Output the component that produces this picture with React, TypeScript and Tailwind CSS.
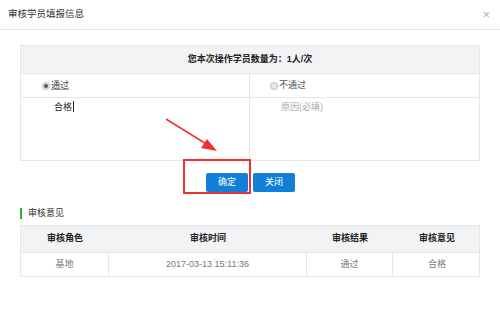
import React from 'react';

const font = { fontFamily: '"Liberation Sans", "Noto Sans CJK SC", sans-serif' };

function Radio({ checked }: { checked?: boolean }) {
  return (
    <span className="w-[8px] h-[8px] rounded-full border border-[#bdbdbd] bg-[#e8e8e8] flex items-center justify-center mr-[1px]">
      {checked && <span className="w-[4px] h-[4px] rounded-full bg-[#555]" />}
    </span>
  );
}

export default function App() {
  const cols = 'grid grid-cols-[88px_198px_86px_88px]';
  return (
    <div className="w-[500px] h-[334px] bg-white relative text-[9px] text-[#333]" style={font}>
      {/* dialog header */}
      <div className="h-[30px] border-b border-[#e8e8e8] flex items-center justify-between pl-[8px] pr-[10px]">
        <span className="text-[#333] text-[9.5px]">审核学员填报信息</span>
        <span className="text-[#b5b5b5] text-[13px] leading-none">×</span>
      </div>

      <div className="px-[20px] pt-[15px]">
        {/* review form */}
        <div className="border border-[#e6e6e6]">
          <div className="h-[27px] bg-[#f2f3f5] flex items-center justify-center font-bold text-[#222]">
            您本次操作学员数量为：1人/次
          </div>
          <div className="grid grid-cols-2 border-t border-[#e6e6e6]">
            <div className="h-[23px] flex items-center pl-[21px] border-r border-[#e6e6e6]">
              <Radio checked />
              <span className="text-[#444] underline decoration-[#999]">通过</span>
            </div>
            <div className="h-[23px] flex items-center pl-[20px] text-[#555]">
              <Radio />
              <span>不通过</span>
            </div>
          </div>
          <div className="grid grid-cols-2 border-t border-[#e6e6e6]">
            <div className="h-[62px] pl-[33px] pt-[3px] border-r border-[#e6e6e6] flex items-start">
              <span className="text-[#222]">合格</span>
              <span className="w-[1px] h-[11px] bg-[#222] ml-[1px]" />
            </div>
            <div className="h-[62px] pl-[31px] pt-[3px] text-[#aaa]">原因(必填)</div>
          </div>
        </div>

        {/* buttons */}
        <div className="flex justify-center gap-[5px] mt-[12px] pl-[1px]">
          <button className="w-[42px] h-[19px] bg-[#0f7fd8] rounded-[2px] text-white text-[9px]" style={font}>确定</button>
          <button className="w-[42px] h-[19px] bg-[#0f7fd8] rounded-[2px] text-white text-[9px]" style={font}>关闭</button>
        </div>

        {/* section title */}
        <div className="flex items-center mt-[16px] h-[11px]">
          <span className="w-[2px] h-[11px] bg-[#34b233] mr-[6px]" />
          <span className="text-[#333]">审核意见</span>
        </div>

        {/* history table */}
        <div className="mt-[6px] border border-[#e6e6e6]">
          <div className={`${cols} h-[26px] bg-[#f2f3f5] font-bold text-[#222]`}>
            <div className="flex items-center justify-center">审核角色</div>
            <div className="flex items-center justify-center">审核时间</div>
            <div className="flex items-center justify-center">审核结果</div>
            <div className="flex items-center justify-center">审核意见</div>
          </div>
          <div className={`${cols} h-[24px] text-[#777] border-t border-[#e6e6e6]`}>
            <div className="flex items-center justify-center border-r border-[#e6e6e6]">基地</div>
            <div className="flex items-center justify-center border-r border-[#e6e6e6]">2017-03-13 15:11:36</div>
            <div className="flex items-center justify-center border-r border-[#e6e6e6]">通过</div>
            <div className="flex items-center justify-center">合格</div>
          </div>
        </div>
      </div>

      {/* annotation overlay */}
      <div className="absolute left-[183px] top-[159px] w-[68px] h-[35px] border-2 border-[#f03030]" />
      <svg className="absolute left-0 top-0" width="500" height="334" viewBox="0 0 500 334">
        <line x1="166" y1="119" x2="208" y2="145" stroke="#f03030" strokeWidth="1.5" />
        <polygon points="217,151 201,148 207,139" fill="#f03030" />
      </svg>
    </div>
  );
}
